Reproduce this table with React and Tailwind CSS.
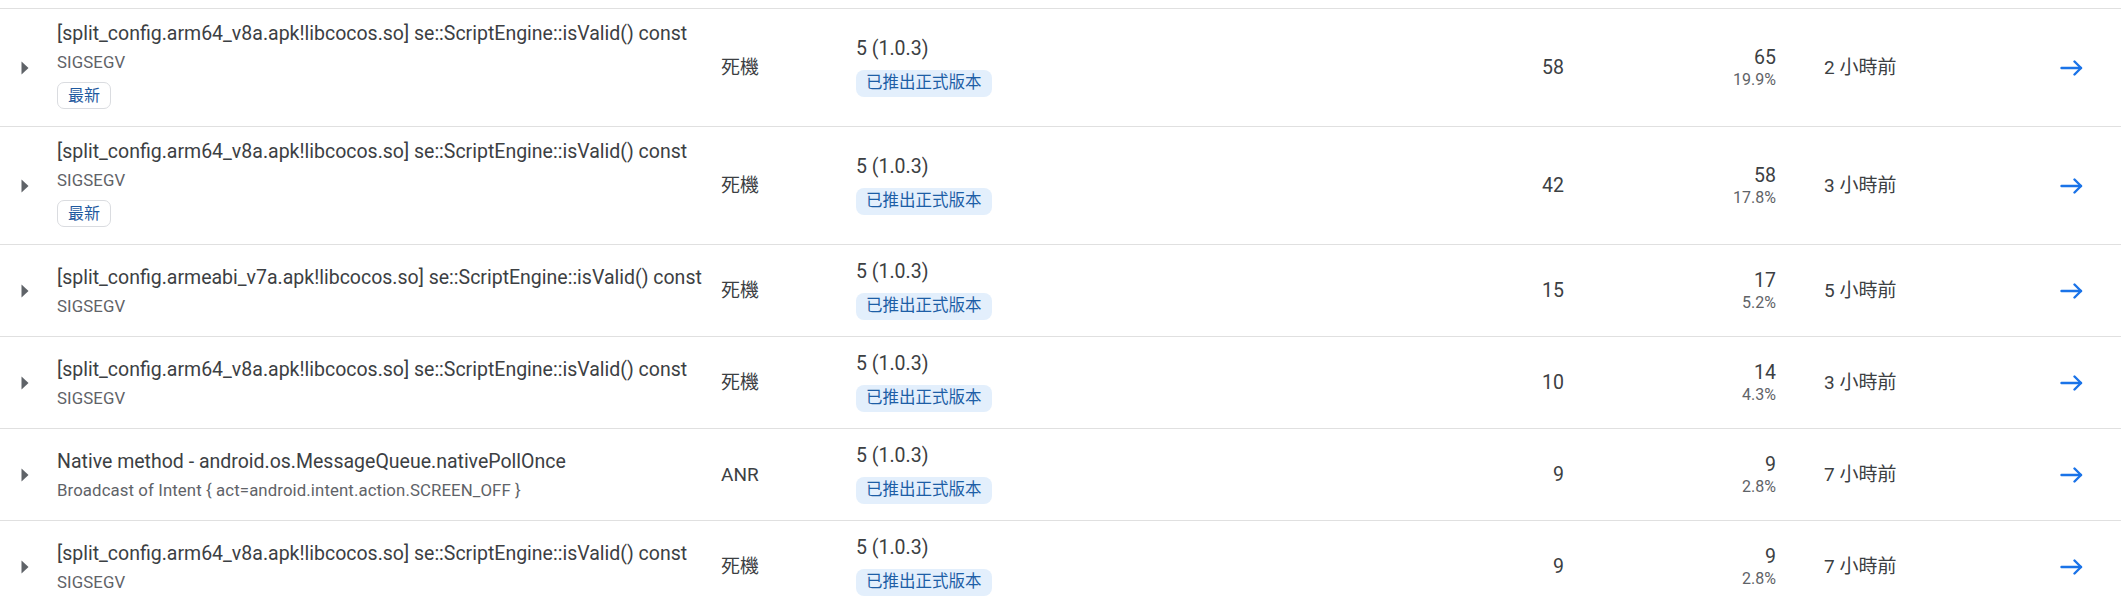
const rows = [
  {
    title: '[split_config.arm64_v8a.apk!libcocos.so] se::ScriptEngine::isValid() const',
    sub: 'SIGSEGV',
    latest: true,
    type: '死機',
    version: '5 (1.0.3)',
    events: 58,
    users: 65,
    pct: '19.9%',
    time: '2 小時前',
  },
  {
    title: '[split_config.arm64_v8a.apk!libcocos.so] se::ScriptEngine::isValid() const',
    sub: 'SIGSEGV',
    latest: true,
    type: '死機',
    version: '5 (1.0.3)',
    events: 42,
    users: 58,
    pct: '17.8%',
    time: '3 小時前',
  },
  {
    title: '[split_config.armeabi_v7a.apk!libcocos.so] se::ScriptEngine::isValid() const',
    sub: 'SIGSEGV',
    type: '死機',
    version: '5 (1.0.3)',
    events: 15,
    users: 17,
    pct: '5.2%',
    time: '5 小時前',
  },
  {
    title: '[split_config.arm64_v8a.apk!libcocos.so] se::ScriptEngine::isValid() const',
    sub: 'SIGSEGV',
    type: '死機',
    version: '5 (1.0.3)',
    events: 10,
    users: 14,
    pct: '4.3%',
    time: '3 小時前',
  },
  {
    title: 'Native method - android.os.MessageQueue.nativePollOnce',
    sub: 'Broadcast of Intent { act=android.intent.action.SCREEN_OFF }',
    type: 'ANR',
    version: '5 (1.0.3)',
    events: 9,
    users: 9,
    pct: '2.8%',
    time: '7 小時前',
  },
  {
    title: '[split_config.arm64_v8a.apk!libcocos.so] se::ScriptEngine::isValid() const',
    sub: 'SIGSEGV',
    type: '死機',
    version: '5 (1.0.3)',
    events: 9,
    users: 9,
    pct: '2.8%',
    time: '7 小時前',
  },
]

function Caret() {
  return (
    <svg width="8" height="14" viewBox="0 0 8 14" className="block">
      <path d="M0.5 0.5 L7.5 7 L0.5 13.5 Z" fill="#5f6368" />
    </svg>
  )
}

function ArrowRight() {
  return (
    <svg width="23" height="16" viewBox="0 0 23 16" fill="none" stroke="#1a73e8" strokeWidth="2.4" strokeLinecap="round" strokeLinejoin="round" className="block">
      <path d="M1.5 8 H21" />
      <path d="M14.5 1.5 L21 8 L14.5 14.5" />
    </svg>
  )
}

function IssueRow({ row }) {
  return (
    <div className={`flex items-center border-t border-[#e0e0e0] ${row.latest ? 'h-[118px]' : 'h-[92px]'}`}>
      {/* expand */}
      <div className="w-[57px] shrink-0 pl-[21px]">
        <Caret />
      </div>

      {/* issue */}
      <div className={`w-[662px] shrink-0 whitespace-nowrap ${row.latest ? 'pb-[5px]' : ''}`}>
        <p className="text-[19.5px] leading-[26px] text-[#3c4043]">{row.title}</p>
        <p className="text-[16.8px] leading-[22px] mt-[4px] text-[#5f6368] tracking-[0.1px]">{row.sub}</p>
        {row.latest && (
          <span className="inline-flex items-center justify-center mt-[9px] h-[27px] px-[10px] rounded-[7px] border border-[#dadce0] bg-white text-[16px] leading-none text-[#1f5aa0]">
            最新
          </span>
        )}
      </div>

      {/* type */}
      <div className="w-[137px] shrink-0 pl-[2px] text-[19px] leading-[26px] text-[#3c4043]">{row.type}</div>

      {/* version */}
      <div className="w-[500px] shrink-0 pb-[3px]">
        <p className="text-[19.5px] leading-[26px] text-[#3c4043]">{row.version}</p>
        <span className="inline-flex items-center mt-[8px] h-[27px] px-[10px] rounded-[8px] bg-[#e3effc] text-[16.5px] leading-none text-[#1d5ea6]">
          已推出正式版本
        </span>
      </div>

      {/* events */}
      <div className="w-[208px] shrink-0 text-right text-[19.5px] leading-[26px] text-[#3c4043]">{row.events}</div>

      {/* users */}
      <div className="w-[212px] shrink-0 text-right pb-[2px]">
        <p className="text-[19.5px] leading-[26px] text-[#3c4043]">{row.users}</p>
        <p className="text-[16px] leading-[18px] text-[#5f6368]">{row.pct}</p>
      </div>

      {/* last seen */}
      <div className="w-[284px] shrink-0 pl-[48px] text-[19px] leading-[26px] text-[#3c4043]">{row.time}</div>

      <div className="w-[23px] shrink-0">
        <ArrowRight />
      </div>
    </div>
  )
}

export default function App() {
  return (
    <div
      className="w-[2121px] h-[603px] overflow-hidden bg-white"
      style={{ fontFamily: 'Roboto, "Noto Sans CJK TC", sans-serif' }}
    >
      <div className="h-[8px]" />
      {rows.map((r, i) => (
        <IssueRow key={i} row={r} />
      ))}
    </div>
  )
}
